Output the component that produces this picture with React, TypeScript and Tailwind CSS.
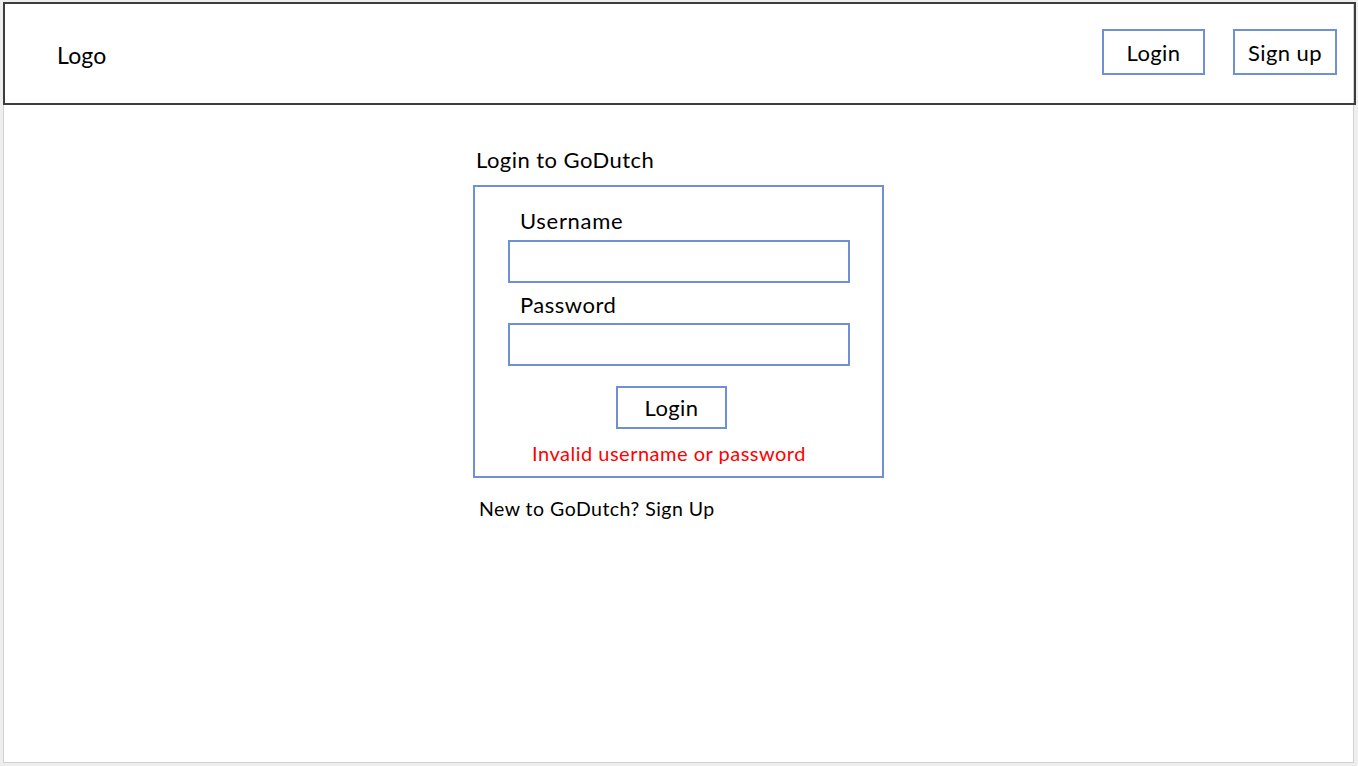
import React from "react";

const font = { fontFamily: "Lato, 'Open Sans', sans-serif" };

export default function App() {
  return (
    <div className="w-[1358px] h-[766px] bg-[#eeeeee] pl-[3px] pt-[2px] overflow-hidden" style={font}>
      <div className="w-[1351px] h-[761px] bg-white border-l border-r border-b border-[#d2d2d2] text-black">
        <header className="w-[1353px] h-[103px] -ml-px border-2 border-[#3c3c3c] flex items-center justify-between">
          <div className="pl-[52px] pt-[2px] text-[23px] leading-[26px] tracking-[0.2px]">Logo</div>
          <div className="flex items-center gap-[28px] pr-[17px] pb-[3px]">
            <button className="w-[103px] h-[46px] border-2 border-[#7090d6] text-[22px] leading-[26px] tracking-[0.4px] flex items-center justify-center pt-[2px]">
              Login
            </button>
            <button className="w-[104px] h-[46px] border-2 border-[#7090d6] text-[22px] leading-[26px] tracking-[0.4px] flex items-center justify-center pt-[2px]">
              Sign up
            </button>
          </div>
        </header>

        <main className="w-[411px] ml-[469px] pt-[42px] flex flex-col">
          <h1 className="pl-[3px] text-[22px] leading-[26px] tracking-[0.45px]">Login to GoDutch</h1>
          <div className="mt-[12px] h-[293px] border-2 border-[#7090d6] flex flex-col">
            <label className="pl-[45px] pt-[21px] text-[22px] leading-[26px] tracking-[0.7px]">Username</label>
            <div className="ml-[33px] mt-[6px] w-[342px] h-[43px] border-2 border-[#7090d6]" />
            <label className="pl-[45px] mt-[9px] text-[22px] leading-[26px] tracking-[0.5px]">Password</label>
            <div className="ml-[33px] mt-[5px] w-[342px] h-[43px] border-2 border-[#7090d6]" />
            <button className="ml-[141px] mt-[20px] w-[111px] h-[43px] border-2 border-[#7090d6] text-[22px] leading-[26px] tracking-[0.4px] flex items-center justify-center">
              Login
            </button>
            <div className="pl-[57px] mt-[12px] text-[20px] leading-[24px] tracking-[0.5px] text-[#ff0000]">
              Invalid username or password
            </div>
          </div>
          <div className="pl-[6px] mt-[19px] text-[19.5px] leading-[24px] tracking-[0.48px]">New to GoDutch? Sign Up</div>
        </main>
      </div>
    </div>
  );
}
